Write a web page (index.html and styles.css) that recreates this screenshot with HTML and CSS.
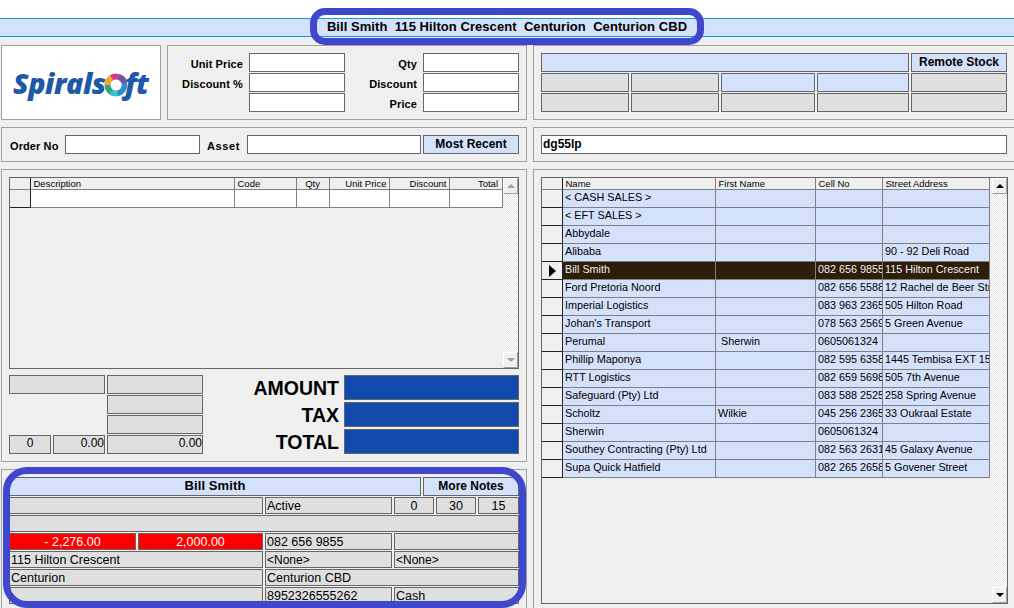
FILE: index.html
```html
<!DOCTYPE html>
<html lang="en">
<head>
<meta charset="utf-8">
<title>Spiralsoft</title>
<link rel="stylesheet" href="styles.css">
</head>
<body>
<div class="app">
  <header class="titlebar">Bill Smith  115 Hilton Crescent  Centurion  Centurion CBD</header>
  <main class="columns">
    <section class="col">
      <div class="toprow">
        <div class="panel logo">
          <span class="logo-text">Spirals</span>
          <svg class="ring" viewBox="0 0 24 24" width="24" height="24" aria-hidden="true">
            <g fill="none" stroke-width="5.5" transform="rotate(-90 12 12)">
              <circle cx="12" cy="12" r="8.5" stroke="#2a8fd0"/>
              <path d="M12 3.5a8.5 8.5 0 0 1 7.4 4.3" stroke="#f5a623"/>
              <path d="M19.4 7.8a8.5 8.5 0 0 1 .6 7" stroke="#e0337f"/>
              <path d="M20 14.8a8.5 8.5 0 0 1-5.6 5.9" stroke="#7b4fa0"/>
              <path d="M5 7a8.5 8.5 0 0 1 7-3.5" stroke="#35a86a"/>
              <path d="M3.7 13.5a8.5 8.5 0 0 1 1.3-6.5" stroke="#3fc0cc"/>
            </g>
          </svg>
          <span class="logo-text logo-end">ft</span>
        </div>
        <div class="panel pricing">
          <label class="lbl">Unit Price</label><div class="f white"></div>
          <label class="lbl">Qty</label><div class="f white"></div>
          <label class="lbl">Discount %</label><div class="f white"></div>
          <label class="lbl">Discount</label><div class="f white"></div>
          <label class="lbl"></label><div class="f white"></div>
          <label class="lbl">Price</label><div class="f white"></div>
        </div>
      </div>
      <div class="panel order">
        <label class="lbl low lbl-first">Order No</label><div class="f white"></div>
        <label class="lbl low lbl-asset">Asset</label><div class="f white"></div>
        <button class="f blue btn">Most Recent</button>
      </div>
      <div class="panel lines">
        <div class="grid grid-left">
          <table class="data">
            <colgroup><col class="w21"><col class="w204"><col class="w62"><col class="w33"><col class="w60"><col class="w60"><col class="w53"></colgroup>
            <thead><tr><th class="ind"></th><th>Description</th><th>Code</th><th class="r pr-qty">Qty</th><th class="r">Unit Price</th><th class="r">Discount</th><th class="r pr-total">Total</th></tr></thead>
            <tbody class="plain"><tr><td class="ind"></td><td></td><td></td><td></td><td></td><td></td><td></td></tr></tbody>
          </table>
          <div class="scroll disabled"><span class="sb up"></span><span class="sb down"></span></div>
        </div>
        <div class="totals">
          <div class="mini">
            <div class="f grey span2"></div><div class="f grey"></div>
            <div class="f grey start3"></div>
            <div class="f grey start3"></div>
            <div class="f grey c">0</div><div class="f grey r">0.00</div><div class="f grey r">0.00</div>
          </div>
          <div class="sums">
            <div class="sum-l">AMOUNT</div><div class="f navy"></div>
            <div class="sum-l">TAX</div><div class="f navy"></div>
            <div class="sum-l">TOTAL</div><div class="f navy"></div>
          </div>
        </div>
      </div>
      <div class="panel account">
        <div class="acc-head">
          <div class="f blue name">Bill Smith</div>
          <button class="f blue btn">More Notes</button>
        </div>
        <div class="acc-grid">
          <div class="f grey s2"></div><div class="f grey">Active</div><div class="f grey c">0</div><div class="f grey c">30</div><div class="f grey c">15</div>
          <div class="f grey s6"></div>
          <div class="f red">- 2,276.00</div><div class="f red">2,000.00</div><div class="f grey">082 656 9855</div><div class="f grey s3"></div>
          <div class="f grey s2">115 Hilton Crescent</div><div class="f grey small">&lt;None&gt;</div><div class="f grey s3 small">&lt;None&gt;</div>
          <div class="f grey s2">Centurion</div><div class="f grey s4">Centurion CBD</div>
          <div class="f grey s2"></div><div class="f grey">8952326555262</div><div class="f grey s3">Cash</div>
        </div>
      </div>
    </section>
    <section class="col">
      <div class="panel stock">
        <div class="f blue s4w"></div><button class="f blue btn">Remote Stock</button>
        <div class="f grey"></div><div class="f grey"></div><div class="f blue"></div><div class="f blue"></div><div class="f grey"></div>
        <div class="f grey"></div><div class="f grey"></div><div class="f grey"></div><div class="f grey"></div><div class="f grey"></div>
      </div>
      <div class="panel search">
        <div class="f white search-box">dg55lp</div>
      </div>
      <div class="panel customers">
        <div class="grid grid-right">
          <table class="data">
            <colgroup><col class="w21"><col class="w153"><col class="w100"><col class="w67"><col class="w107"></colgroup>
            <thead><tr><th class="ind"></th><th>Name</th><th>First Name</th><th>Cell No</th><th>Street Address</th></tr></thead>
            <tbody>
              <tr><td class="ind"></td><td>&lt; CASH SALES &gt;</td><td></td><td></td><td></td></tr>
              <tr><td class="ind"></td><td>&lt; EFT SALES &gt;</td><td></td><td></td><td></td></tr>
              <tr><td class="ind"></td><td>Abbydale</td><td></td><td></td><td></td></tr>
              <tr><td class="ind"></td><td>Alibaba</td><td></td><td></td><td>90 - 92 Deli Road</td></tr>
              <tr class="sel"><td class="ind"><span class="pointer"></span></td><td>Bill Smith</td><td></td><td>082 656 9855</td><td>115 Hilton Crescent</td></tr>
              <tr><td class="ind"></td><td>Ford Pretoria Noord</td><td></td><td>082 656 5588</td><td>12 Rachel de Beer Street</td></tr>
              <tr><td class="ind"></td><td>Imperial Logistics</td><td></td><td>083 963 2365</td><td>505 Hilton Road</td></tr>
              <tr><td class="ind"></td><td>Johan's Transport</td><td></td><td>078 563 2569</td><td>5 Green Avenue</td></tr>
              <tr><td class="ind"></td><td>Perumal</td><td> Sherwin</td><td>0605061324</td><td></td></tr>
              <tr><td class="ind"></td><td>Phillip Maponya</td><td></td><td>082 595 6358</td><td>1445 Tembisa EXT 15</td></tr>
              <tr><td class="ind"></td><td>RTT Logistics</td><td></td><td>082 659 5698</td><td>505 7th Avenue</td></tr>
              <tr><td class="ind"></td><td>Safeguard (Pty) Ltd</td><td></td><td>083 588 2525</td><td>258 Spring Avenue</td></tr>
              <tr><td class="ind"></td><td>Scholtz</td><td>Wilkie</td><td>045 256 2365</td><td>33 Oukraal Estate</td></tr>
              <tr><td class="ind"></td><td>Sherwin</td><td></td><td>0605061324</td><td></td></tr>
              <tr><td class="ind"></td><td>Southey Contracting (Pty) Ltd</td><td></td><td>082 563 2631</td><td>45 Galaxy Avenue</td></tr>
              <tr><td class="ind"></td><td>Supa Quick Hatfield</td><td></td><td>082 265 2658</td><td>5 Govener Street</td></tr>
            </tbody>
          </table>
          <div class="scroll"><span class="sb up"></span><span class="sb down"></span></div>
        </div>
      </div>
    </section>
  </main>
  <div class="hl hl-title"></div>
  <div class="hl hl-account"></div>
</div>
</body>
</html>
```
FILE: styles.css
```css
* { box-sizing: border-box; }
html, body { margin: 0; padding: 0; }
body {
  font-family: "Liberation Sans", Arial, sans-serif;
  font-size: 12px;
  color: #000;
  background: #efefef;
  overflow: hidden;
}
.app {
  position: relative;
  width: 1014px;
  height: 608px;
  overflow: hidden;
  background: #efefef;
  box-shadow: inset 0 18px 0 #fff;
}

/* title */
.titlebar {
  margin-top: 18px;
  height: 19px;
  line-height: 16px;
  text-align: center;
  white-space: pre;
  font-size: 13px;
  font-weight: bold;
  letter-spacing: 0.06px;
  background: #d3e1fa;
  border-top: 1px solid #0a9be0;
  border-bottom: 1px solid #0a9be0;
}

/* layout */
.columns {
  display: grid;
  grid-template-columns: 526px 486px;
  column-gap: 6px;
  margin: 8px 0 0 1px;
}
.col { display: flex; flex-direction: column; gap: 7px; min-width: 0; }
.toprow { display: flex; gap: 6px; }
.panel {
  border: 1px solid #a0a0a0;
  padding: 7px;
}

/* fields */
.f {
  border: 1px solid #666;
  height: 19px;
  line-height: 15px;
  padding: 0 1px;
  font: inherit;
  white-space: nowrap;
  overflow: hidden;
  min-width: 0;
}
.white { background: #fff; }
.grey { background: #dfdfdf; }
.blue { background: #d3e1fa; }
.red { background: #f00; color: #fff; text-align: center; }
.navy { background: #114aab; height: 25px; }
.c { text-align: center; }
.r { text-align: right; padding-right: 0; }
.btn {
  font-weight: bold;
  font-size: 12px;
  line-height: 15px;
  text-align: center;
  color: #000;
  padding: 0;
}
.lbl {
  font-size: 11px;
  font-weight: bold;
  line-height: 22px;
  text-align: right;
  letter-spacing: 0.1px;
  white-space: nowrap;
}
.low { text-align: left; }

/* logo */
.logo {
  width: 160px;
  height: 75px;
  padding: 0 0 0 11px;
  background: #fff;
  display: flex;
  align-items: center;
}
.logo-text {
  font-family: "Open Sans", sans-serif;
  font-size: 28.5px;
  font-weight: 800;
  font-style: italic;
  color: #2058a8;
  letter-spacing: -0.4px;
  line-height: 30px;
}
.ring { flex: none; margin: 5px 0 0 -2px; }
.logo-end { margin-left: -3px; }

/* pricing */
.pricing {
  flex: 1;
  height: 75px;
  display: grid;
  grid-template-columns: 68px 96px 66px 96px;
  grid-auto-rows: 19px;
  gap: 1px 6px;
}

/* order */
.order {
  height: 35px;
  display: grid;
  grid-template-columns: 56px 135px 47px 174px 96px;
  grid-template-rows: 19px;
}
.lbl-first { padding-left: 1px; }
.lbl-asset { padding-left: 7px; letter-spacing: 0.6px; }
.order .btn { margin-left: 2px; width: 96px; }

/* data grid */
.grid {
  display: flex;
  border: 1px solid #666;
  background: #efefef;
  overflow: hidden;
}
.grid-left { height: 192px; width: 510px; }
.grid-right { height: 427px; width: 467px; gap: 2px; }
.data {
  table-layout: fixed;
  border-collapse: separate;
  border-spacing: 0;
  flex: none;
  align-self: flex-start;
  font-size: 10.8px;
}
.grid-left .data { width: 493px; }
.grid-right .data { width: 448px; }
.w21 { width: 21px; }
.w33 { width: 33px; }
.w53 { width: 53px; }
.w60 { width: 60px; }
.w62 { width: 62px; }
.w67 { width: 67px; }
.w100 { width: 100px; }
.w107 { width: 107px; }
.w153 { width: 153px; }
.w204 { width: 204px; }
.data th, .data td {
  padding: 0 0 0 2px;
  overflow: hidden;
  white-space: pre;
  border-right: 1px solid #808080;
  border-bottom: 1px solid #808080;
  text-align: left;
}
.data th {
  height: 12px;
  padding-left: 2.5px;
  font-size: 9.5px;
  font-weight: normal;
  line-height: 11px;
  background: #efefef;
}
.data th.r { text-align: right; padding: 0 2.5px 0 0; }
.data th.pr-qty { padding-right: 9px; }
.data th.pr-total { padding-right: 4px; }
.data td {
  height: 18px;
  line-height: 15px;
  padding-bottom: 2px;
  background: #d3e1fa;
}
.data .plain td { background: #fff; }
.data .ind, .data .plain .ind, .data .sel .ind {
  background: #efefef;
  border-right-color: #222;
  border-bottom-color: #222;
  padding: 0;
}
.data th.ind { border-bottom-color: #808080; }
.data .sel td:not(.ind) { background: #2e1d08; color: #eee; }
.pointer {
  display: block;
  width: 0;
  height: 0;
  margin-left: 7px;
  border-left: 7px solid #000;
  border-top: 6px solid transparent;
  border-bottom: 6px solid transparent;
}

/* scrollbar */
.scroll {
  flex: 1;
  display: flex;
  flex-direction: column;
  justify-content: space-between;
  background: conic-gradient(#fff 25%, #e6e6e6 0 50%, #fff 0 75%, #e6e6e6 0) 0 0 / 2px 2px;
}
.sb {
  display: flex;
  align-items: center;
  justify-content: center;
  height: 16px;
  background: #f0f0f0;
  border: 1px solid;
  border-color: #fff #a0a0a0 #a0a0a0 #fff;
}
.sb::after {
  content: "";
  border-left: 4px solid transparent;
  border-right: 4px solid transparent;
}
.up::after { border-bottom: 4px solid #000; }
.down::after { border-top: 4px solid #000; }
.disabled .up::after { border-bottom-color: #a0a0a0; }
.disabled .down::after { border-top-color: #a0a0a0; }

/* totals */
.totals {
  display: flex;
  justify-content: space-between;
  margin-top: 6px;
}
.mini {
  display: grid;
  grid-template-columns: 42px 52px 96px;
  grid-auto-rows: 19px;
  gap: 1px 2px;
}
.span2 { grid-column: span 2; }
.start3 { grid-column: 3; }
.sums {
  display: grid;
  grid-template-columns: auto 175px;
  grid-auto-rows: 25px;
  gap: 2px 5px;
}
.sum-l {
  font-size: 19.5px;
  font-weight: bold;
  line-height: 27px;
  text-align: right;
}

/* account */
.account { height: 146px; }
.acc-head {
  display: grid;
  grid-template-columns: 412px 96px;
  column-gap: 2px;
  margin-bottom: 1px;
}
.name { font-size: 13px; font-weight: bold; text-align: center; line-height: 16px; letter-spacing: 0.1px; }
.acc-grid {
  display: grid;
  grid-template-columns: 127px 125px 127px 40px 40px 41px;
  grid-auto-rows: 17px;
  gap: 1px 2px;
  font-size: 12.5px;
}
.acc-grid .f { height: 17px; line-height: 16px; }
.acc-grid .small { font-size: 12px; }
.s2 { grid-column: span 2; }
.s3 { grid-column: span 3; }
.s4 { grid-column: span 4; }
.s6 { grid-column: span 6; }

/* right column */
.stock {
  height: 75px;
  display: grid;
  grid-template-columns: 88px 88px 94px 92px 96px;
  grid-auto-rows: 19px;
  gap: 1px 2px;
}
.s4w { grid-column: span 4; }
.search { height: 35px; }
.search-box { width: 466px; font-size: 12px; font-weight: bold; line-height: 16px; padding-left: 1px; }
.customers { height: 460px; }

/* highlight outlines */
.hl {
  position: absolute;
  border: 7px solid #3f48cc;
  pointer-events: none;
}
.hl-title { left: 310px; top: 8px; width: 394px; height: 37px; border-radius: 15px; }
.hl-account { left: 3px; top: 467px; width: 523px; height: 141px; border-radius: 24px; }
```
